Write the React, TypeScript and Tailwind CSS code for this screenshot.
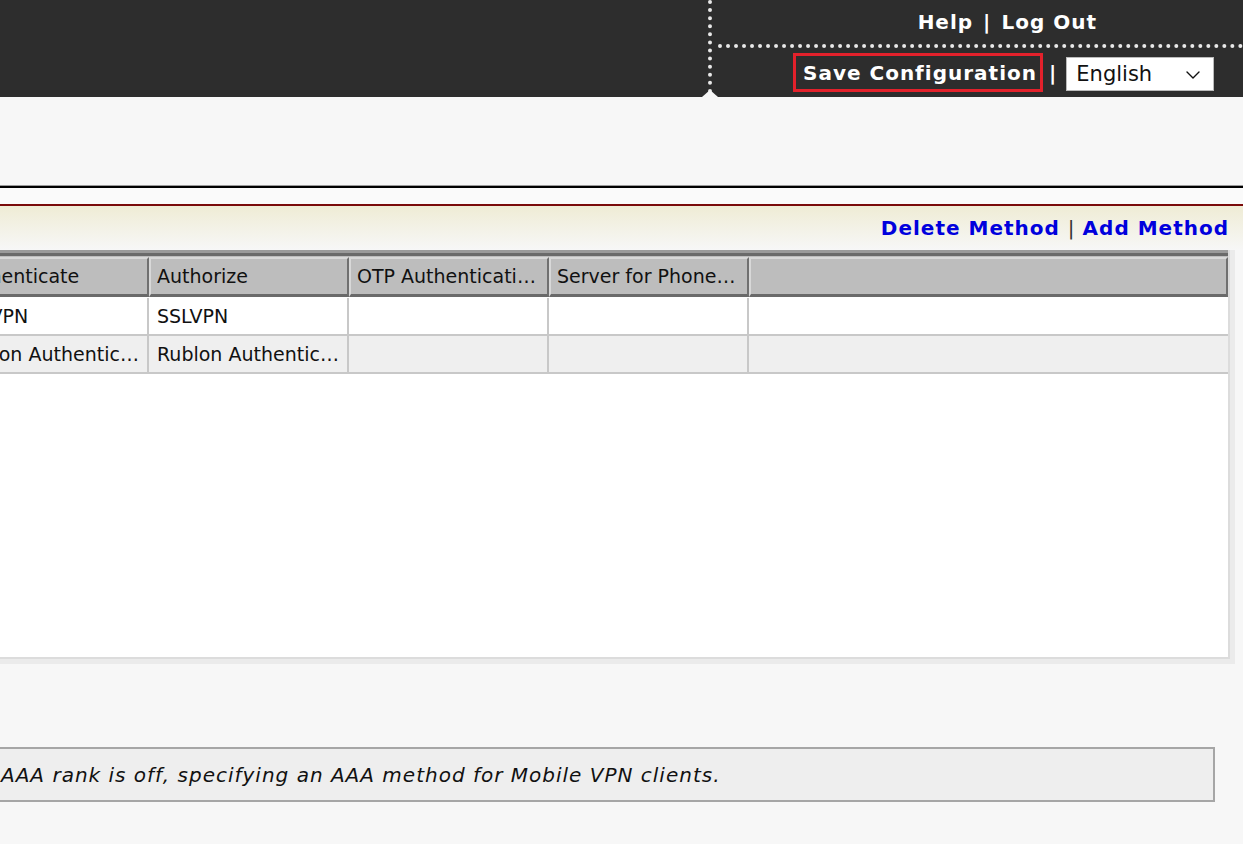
import { ChevronDown } from "lucide-react";

const headers = ["Authenticate", "Authorize", "OTP Authentication", "Server for Phone Authentication", ""];

const rows = [
  ["SSLVPN", "SSLVPN", "", "", ""],
  ["Rublon Authentication", "Rublon Authentication", "", "", ""],
];

const colW = ["w-[200px]", "w-[200px]", "w-[200px]", "w-[200px]", "flex-1"];

const App = () => {
  return (
    <div className="w-[1243px] h-[844px] overflow-hidden bg-[#f7f7f7] font-['DejaVu_Sans',sans-serif] text-[#111]">
      {/* Top bar */}
      <header className="relative h-[97px] bg-[#2d2d2d] flex">
        <div className="w-[712px] h-[93px] border-r-4 border-dotted border-[#e8e8e8]" />
        <div className="absolute left-[702px] bottom-0 w-0 h-0 border-l-[8px] border-r-[8px] border-b-[7px] border-l-transparent border-r-transparent border-b-[#f7f7f7]" />
        <div className="flex-1 flex flex-col">
          <div className="h-[44px] flex items-center justify-end pr-[146px] text-white font-bold text-[20px] tracking-[1px]">
            <span>Help</span>
            <span className="mx-[10px]">|</span>
            <span>Log Out</span>
          </div>
          <div className="ml-[6px] border-t-4 border-dotted border-[#e8e8e8]" />
          <div className="flex items-center pl-[81px] pt-[5px]">
            <div className="h-[39px] w-[250px] border-[3px] border-[#e3212b] flex items-center pl-[7px] pt-[1px] text-white font-bold text-[20px] tracking-[1px] whitespace-nowrap">
              Save Configuration
            </div>
            <span className="mx-[6px] text-white font-bold text-[20px]">|</span>
            <div className="ml-[4px] mt-[2px] w-[148px] h-[34px] bg-white border border-[#bbb] flex items-center justify-between pl-[9px] pr-[8px] pt-[2px] text-[21px] text-[#111]">
              <span>English</span>
              <ChevronDown className="w-6 h-6" strokeWidth={1.4} />
            </div>
          </div>
        </div>
      </header>

      {/* Title separator */}
      <div className="h-[88px]" />
      <div className="border-t border-[#9a9a9a]" />
      <div className="border-t-2 border-black" />
      <div className="h-[16px] bg-[#fafafa]" />
      <div className="border-t-2 border-[#7a0a0a]" />
      <div className="h-[44px] bg-gradient-to-b from-[#efecd5] to-[#f7f7f7] flex items-center justify-end pr-[14px] text-[20px]">
        <a className="font-bold text-[#0000dd] tracking-[1px]">Delete Method</a>
        <span className="mx-[8px] text-[#333]">|</span>
        <a className="font-bold text-[#0000dd] tracking-[1px]">Add Method</a>
      </div>

      {/* Table */}
      <div className="-ml-[51px] w-[1286px] border-r-[5px] border-b-[5px] border-[#ebebeb]">
        <div className="h-[409px] bg-white border-r-2 border-b-2 border-[#dcdcdc] flex flex-col">
          <div className="border-t-[3px] border-[#9a9a9a]" />
          <div className="border-t-[3px] border-[#6a6a6a]" />
          <div className="h-[1px] bg-[#bdbdbd]" />
          <div className="flex h-[40px] bg-[#bdbdbd]">
            {headers.map((h, i) => (
              <div
                key={i}
                className={`${colW[i]} border-t-2 border-l-2 border-r-2 border-b-[3px] border-t-[#d8d8d8] border-l-[#d8d8d8] border-r-[#707070] border-b-[#6a6a6a] flex items-center pl-[6px] pr-[9px] text-[19px] text-[#111] overflow-hidden`}
              >
                <span className="truncate whitespace-nowrap">{h}</span>
              </div>
            ))}
          </div>
          <div className="h-[1px] bg-white" />
          {rows.map((r, ri) => (
            <div key={ri} className={`flex h-[38px] border-b-2 border-[#c8c8c8] ${ri % 2 ? "bg-[#efefef]" : "bg-white"}`}>
              {r.map((c, ci) => (
                <div
                  key={ci}
                  className={`${colW[ci]} ${ci < 4 ? "border-r-2 border-[#c8c8c8]" : ""} flex items-center px-[8px] text-[19px] overflow-hidden`}
                >
                  <span className="truncate whitespace-nowrap">{c}</span>
                </div>
              ))}
            </div>
          ))}
          <div className="flex-1" />
        </div>
      </div>

      {/* Info note */}
      <div className="h-[83px]" />
      <div className="-ml-[4px] w-[1219px] h-[55px] border-2 border-[#a6a6a6] bg-[#eeeeee] flex items-center pl-[3px] text-[20px] italic tracking-[1px] text-[#111] whitespace-nowrap">
        AAA rank is off, specifying an AAA method for Mobile VPN clients.
      </div>
    </div>
  );
};

export default App;
